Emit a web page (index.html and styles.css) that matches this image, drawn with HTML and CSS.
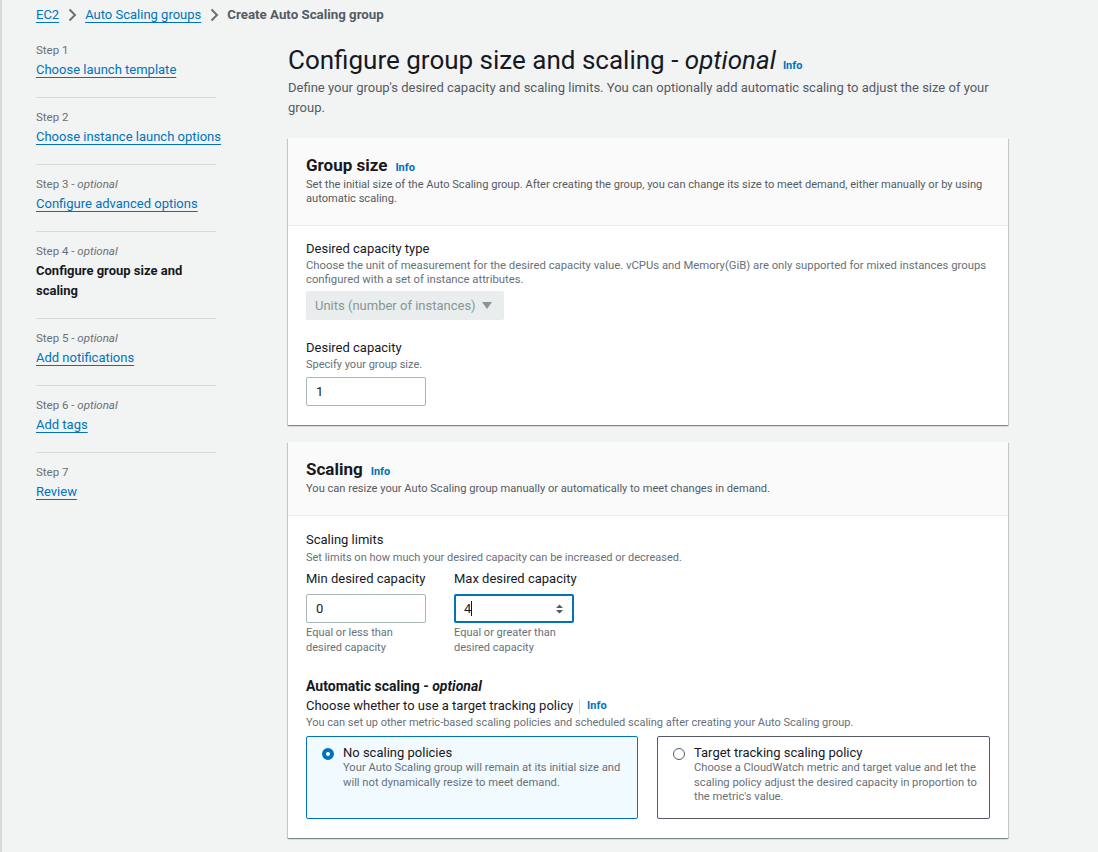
FILE: index.html
```html
<!DOCTYPE html>
<html>
<head>
<meta charset="utf-8">
<link rel="stylesheet" href="styles.css">
</head>
<body>
<div class="page">
  <nav class="crumbs">
    <a class="link" href="#">EC2</a>
    <svg class="chev" width="16" height="16" viewBox="0 0 16 16"><path d="M5.5 2.5 L11 8 L5.5 13.5" fill="none" stroke="#687078" stroke-width="2"/></svg>
    <a class="link" href="#">Auto Scaling groups</a>
    <svg class="chev" width="16" height="16" viewBox="0 0 16 16"><path d="M5.5 2.5 L11 8 L5.5 13.5" fill="none" stroke="#687078" stroke-width="2"/></svg>
    <span class="crumb-current">Create Auto Scaling group</span>
  </nav>
  <div class="layout">
    <aside class="steps">
      <div class="step">
        <div class="step-num">Step 1</div>
        <a class="link step-link" href="#">Choose launch template</a>
      </div>
      <div class="step">
        <div class="step-num">Step 2</div>
        <a class="link step-link" href="#">Choose instance launch options</a>
      </div>
      <div class="step">
        <div class="step-num">Step 3 - <i>optional</i></div>
        <a class="link step-link" href="#">Configure advanced options</a>
      </div>
      <div class="step">
        <div class="step-num">Step 4 - <i>optional</i></div>
        <div class="step-current">Configure group size and scaling</div>
      </div>
      <div class="step">
        <div class="step-num">Step 5 - <i>optional</i></div>
        <a class="link step-link" href="#">Add notifications</a>
      </div>
      <div class="step">
        <div class="step-num">Step 6 - <i>optional</i></div>
        <a class="link step-link" href="#">Add tags</a>
      </div>
      <div class="step last">
        <div class="step-num">Step 7</div>
        <a class="link step-link" href="#">Review</a>
      </div>
    </aside>
    <main class="main">
      <h1 class="title"><span>Configure group size and scaling - <i>optional</i></span><a class="info" href="#">Info</a></h1>
      <p class="lead">Define your group's desired capacity and scaling limits. You can optionally add automatic scaling to adjust the size of your group.</p>

      <section class="panel">
        <header class="panel-head">
          <h2 class="panel-title">Group size <a class="info" href="#">Info</a></h2>
          <p class="panel-desc">Set the initial size of the Auto Scaling group. After creating the group, you can change its size to meet demand, either manually or by using automatic scaling.</p>
        </header>
        <div class="panel-body">
          <div class="field">
            <div class="label">Desired capacity type</div>
            <div class="desc wide">Choose the unit of measurement for the desired capacity value. vCPUs and Memory(GiB) are only supported for mixed instances groups configured with a set of instance attributes.</div>
            <div class="select">
              <span>Units (number of instances)</span>
              <svg width="10" height="8" viewBox="0 0 10 8"><path d="M0 0 H10 L5 7 Z" fill="#879596"/></svg>
            </div>
          </div>
          <div class="field field-gap">
            <div class="label">Desired capacity</div>
            <div class="desc">Specify your group size.</div>
            <div class="input">1</div>
          </div>
        </div>
      </section>

      <section class="panel">
        <header class="panel-head">
          <h2 class="panel-title">Scaling <a class="info" href="#">Info</a></h2>
          <p class="panel-desc">You can resize your Auto Scaling group manually or automatically to meet changes in demand.</p>
        </header>
        <div class="panel-body body-2">
          <div class="label">Scaling limits</div>
          <div class="desc limits-desc">Set limits on how much your desired capacity can be increased or decreased.</div>
          <div class="limits">
            <div class="limit">
              <div class="label">Min desired capacity</div>
              <div class="input">0</div>
              <div class="hint">Equal or less than desired capacity</div>
            </div>
            <div class="limit">
              <div class="label">Max desired capacity</div>
              <div class="input focused"><span>4</span><span class="caret"></span>
                <svg class="spin" width="9" height="12" viewBox="0 0 9 12"><path d="M1 5 L4.5 1.5 L8 5 Z M1 7 L4.5 10.5 L8 7 Z" fill="#545b64"/></svg>
              </div>
              <div class="hint">Equal or greater than desired capacity</div>
            </div>
          </div>
          <h3 class="sub">Automatic scaling - <i>optional</i></h3>
          <div class="label">Choose whether to use a target tracking policy <span class="sep"></span><a class="info" href="#">Info</a></div>
          <div class="desc">You can set up other metric-based scaling policies and scheduled scaling after creating your Auto Scaling group.</div>
          <div class="cards">
            <div class="card selected">
              <span class="radio on"></span>
              <div class="card-text">
                <div class="card-title">No scaling policies</div>
                <div class="card-desc">Your Auto Scaling group will remain at its initial size and will not dynamically resize to meet demand.</div>
              </div>
            </div>
            <div class="card">
              <span class="radio"></span>
              <div class="card-text">
                <div class="card-title">Target tracking scaling policy</div>
                <div class="card-desc">Choose a CloudWatch metric and target value and let the scaling policy adjust the desired capacity in proportion to the metric's value.</div>
              </div>
            </div>
          </div>
        </div>
      </section>
    </main>
  </div>
</div>
</body>
</html>
```
FILE: styles.css
```css
html, body { margin: 0; padding: 0; }
body {
  background: #f2f3f3;
  font-family: Roboto, "Liberation Sans", sans-serif;
  color: #16191f;
  font-size: 13px;
}
.page {
  min-height: 852px;
  border-left: 2px solid #d5dbdb;
  padding-left: 34px;
  box-sizing: border-box;
}
.link { color: #0073bb; text-decoration: underline; text-underline-offset: 3px; }
.crumbs {
  display: flex;
  align-items: center;
  height: 30px;
  font-size: 13px;
  line-height: 20px;
}
.chev { margin: 0 5px; }
.crumb-current { color: #545b64; font-weight: 700; font-size: 13.3px; }

.layout {
  display: grid;
  grid-template-columns: 180px 720px;
  column-gap: 72px;
}
.steps { padding-top: 1px; }
.step {
  padding: 11px 0 17px;
  border-bottom: 1px solid #d5dbdb;
}
.step.last { border-bottom: none; }
.step-num {
  font-size: 11.5px;
  line-height: 16px;
  color: #687078;
}
.step-num i { font-style: italic; }
.step-link, .step-current {
  display: inline-block;
  margin-top: 2px;
  font-size: 13px;
  line-height: 20px;
}
.step-link { white-space: nowrap; }
.step-current { font-weight: 700; color: #16191f; display: block; }

.main { padding-top: 13px; }
.title {
  margin: 0;
  display: flex;
  align-items: baseline;
  font-size: 26px;
  font-weight: 400;
  line-height: 34px;
  color: #16191f;
}
.info {
  color: #0073bb;
  font-size: 11px;
  font-weight: 700;
  text-decoration: none;
  margin-left: 4px;
}
.title .info { margin-left: 7px; line-height: 14px; }
.lead {
  margin: 1px 0 20px;
  font-size: 13px;
  line-height: 20px;
  color: #545b64;
}
.panel {
  background: #fff;
  box-shadow: 0 1px 1px 0 rgba(0,28,36,.3), 1px 1px 1px 0 rgba(0,28,36,.15), -1px 1px 1px 0 rgba(0,28,36,.15);
  margin-bottom: 17px;
}
.panel-head {
  background: #fafafa;
  border-bottom: 1px solid #eaeded;
  padding: 16px 18px 19px;
}
.panel-title {
  margin: 0;
  display: flex;
  align-items: baseline;
  font-size: 17px;
  line-height: 22px;
  font-weight: 700;
  color: #16191f;
}
.panel-title .info { margin-left: 8px; line-height: 14px; }
.panel-desc {
  margin: 2px 0 0;
  font-size: 11.1px;
  line-height: 14px;
  color: #545b64;
}
.panel-body { padding: 13px 8px 19px 18px; }
.body-2 { padding-top: 14px; }
.label {
  font-size: 13px;
  line-height: 20px;
  color: #16191f;
  display: flex;
  align-items: center;
  white-space: nowrap;
}
.desc {
  font-size: 11px;
  line-height: 14px;
  color: #687078;
}
.desc.wide { font-size: 11.3px; }
.limits-desc { margin-top: 1px; }
.select {
  margin-top: 4px;
  width: 198px;
  height: 29px;
  background: #eaeded;
  border-radius: 2px;
  display: flex;
  align-items: center;
  justify-content: space-between;
  padding: 0 12px 0 9px;
  box-sizing: border-box;
  color: #879596;
  font-size: 13px;
}
.field-gap { margin-top: 18px; }
.input {
  margin-top: 5px;
  width: 120px;
  height: 29px;
  box-sizing: border-box;
  border: 1px solid #aab7b8;
  border-radius: 2px;
  padding: 0 9px;
  display: flex;
  align-items: center;
  font-size: 13px;
  color: #16191f;
  background: #fff;
}
.input.focused {
  border: 2px solid #0073bb;
  padding: 0 8px;
}
.caret { width: 1px; height: 15px; background: #16191f; }
.spin { margin-left: auto; }
.limits { display: flex; gap: 28px; margin-top: 4px; }
.limit { width: 120px; }
.limit .input { margin-top: 5px; }
.hint {
  margin-top: 2px;
  font-size: 11px;
  line-height: 15px;
  color: #687078;
}
.sub {
  margin: 21px 0 0;
  font-size: 14px;
  line-height: 20px;
  font-weight: 700;
  color: #16191f;
}
.sep {
  display: inline-block;
  width: 1px;
  height: 15px;
  background: #d5dbdb;
  margin: 0 7px 0 6px;
}
.label .info { margin-left: 0; }
.cards {
  display: grid;
  grid-template-columns: 332px 333px;
  column-gap: 19px;
  margin-top: 6px;
}
.card {
  border: 1px solid #545b64;
  border-radius: 2px;
  padding: 6px 8px 10px 14px;
  display: flex;
  align-items: flex-start;
  min-height: 83px;
  box-sizing: border-box;
}
.card.selected {
  border-color: #0073bb;
  background: #f1faff;
}
.radio {
  flex: none;
  width: 12px;
  height: 12px;
  border-radius: 50%;
  border: 1px solid #545b64;
  box-sizing: border-box;
  margin: 5px 9px 0 1px;
  background: #fff;
}
.radio.on {
  border: 4px solid #0073bb;
}
.card-title {
  font-size: 13px;
  line-height: 20px;
  color: #16191f;
}
.card-desc {
  margin-top: -2px;
  font-size: 11.2px;
  line-height: 14.5px;
  color: #687078;
}
```
